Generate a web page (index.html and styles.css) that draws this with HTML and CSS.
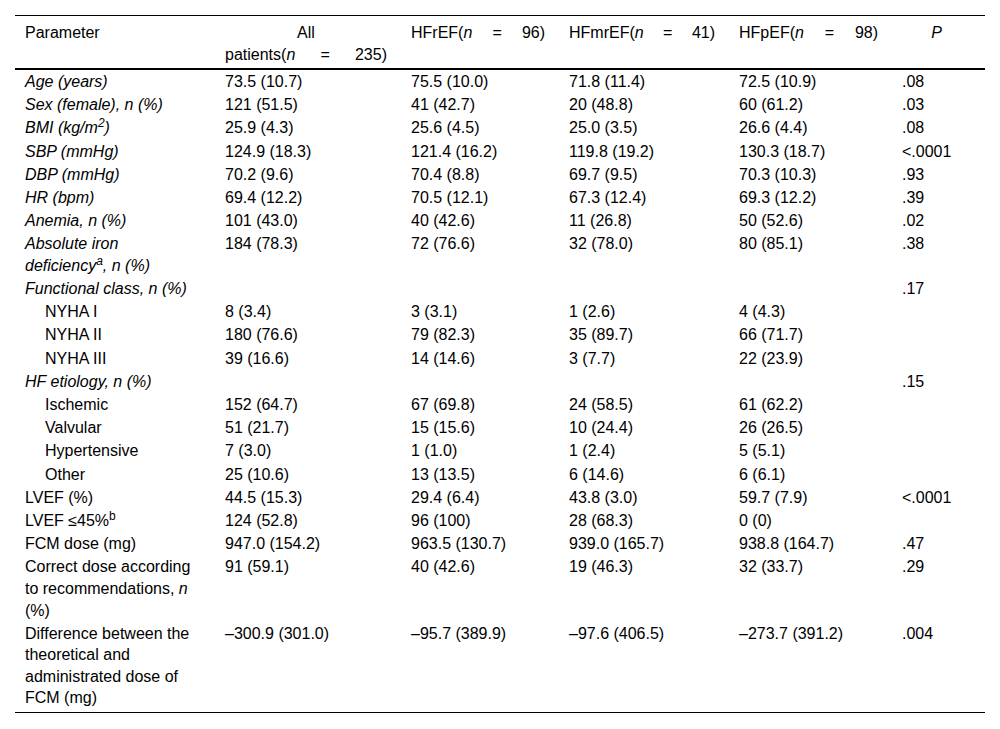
FILE: index.html
```html
<!DOCTYPE html>
<html>
<head>
<meta charset="utf-8">
<link rel="stylesheet" href="styles.css">
</head>
<body>
<table class="tbl">
  <colgroup>
    <col class="c1"><col class="c2"><col class="c3"><col class="c4"><col class="c5"><col class="c6">
  </colgroup>
  <thead>
    <tr>
      <th class="left">Parameter</th>
      <th><div class="ctr">All</div><div class="just">patients(<i>n</i> = 235)</div></th>
      <th><div class="just">HFrEF(<i>n</i> = 96)</div></th>
      <th><div class="just">HFmrEF(<i>n</i> = 41)</div></th>
      <th><div class="just">HFpEF(<i>n</i> = 98)</div></th>
      <th class="ctrcell"><i>P</i></th>
    </tr>
  </thead>
  <tbody>
    <tr><td><i>Age (years)</i></td><td>73.5 (10.7)</td><td>75.5 (10.0)</td><td>71.8 (11.4)</td><td>72.5 (10.9)</td><td>.08</td></tr>
    <tr><td><i>Sex (female), n (%)</i></td><td>121 (51.5)</td><td>41 (42.7)</td><td>20 (48.8)</td><td>60 (61.2)</td><td>.03</td></tr>
    <tr><td><i>BMI (kg/m<sup>2</sup>)</i></td><td>25.9 (4.3)</td><td>25.6 (4.5)</td><td>25.0 (3.5)</td><td>26.6 (4.4)</td><td>.08</td></tr>
    <tr><td><i>SBP (mmHg)</i></td><td>124.9 (18.3)</td><td>121.4 (16.2)</td><td>119.8 (19.2)</td><td>130.3 (18.7)</td><td>&lt;.0001</td></tr>
    <tr><td><i>DBP (mmHg)</i></td><td>70.2 (9.6)</td><td>70.4 (8.8)</td><td>69.7 (9.5)</td><td>70.3 (10.3)</td><td>.93</td></tr>
    <tr><td><i>HR (bpm)</i></td><td>69.4 (12.2)</td><td>70.5 (12.1)</td><td>67.3 (12.4)</td><td>69.3 (12.2)</td><td>.39</td></tr>
    <tr><td><i>Anemia, n (%)</i></td><td>101 (43.0)</td><td>40 (42.6)</td><td>11 (26.8)</td><td>50 (52.6)</td><td>.02</td></tr>
    <tr><td><i>Absolute iron deficiency<sup>a</sup>, n (%)</i></td><td>184 (78.3)</td><td>72 (76.6)</td><td>32 (78.0)</td><td>80 (85.1)</td><td>.38</td></tr>
    <tr><td><i>Functional class, n (%)</i></td><td></td><td></td><td></td><td></td><td>.17</td></tr>
    <tr><td class="sub">NYHA I</td><td>8 (3.4)</td><td>3 (3.1)</td><td>1 (2.6)</td><td>4 (4.3)</td><td></td></tr>
    <tr><td class="sub">NYHA II</td><td>180 (76.6)</td><td>79 (82.3)</td><td>35 (89.7)</td><td>66 (71.7)</td><td></td></tr>
    <tr><td class="sub">NYHA III</td><td>39 (16.6)</td><td>14 (14.6)</td><td>3 (7.7)</td><td>22 (23.9)</td><td></td></tr>
    <tr><td><i>HF etiology, n (%)</i></td><td></td><td></td><td></td><td></td><td>.15</td></tr>
    <tr><td class="sub">Ischemic</td><td>152 (64.7)</td><td>67 (69.8)</td><td>24 (58.5)</td><td>61 (62.2)</td><td></td></tr>
    <tr><td class="sub">Valvular</td><td>51 (21.7)</td><td>15 (15.6)</td><td>10 (24.4)</td><td>26 (26.5)</td><td></td></tr>
    <tr><td class="sub">Hypertensive</td><td>7 (3.0)</td><td>1 (1.0)</td><td>1 (2.4)</td><td>5 (5.1)</td><td></td></tr>
    <tr><td class="sub">Other</td><td>25 (10.6)</td><td>13 (13.5)</td><td>6 (14.6)</td><td>6 (6.1)</td><td></td></tr>
    <tr><td>LVEF (%)</td><td>44.5 (15.3)</td><td>29.4 (6.4)</td><td>43.8 (3.0)</td><td>59.7 (7.9)</td><td>&lt;.0001</td></tr>
    <tr><td>LVEF ≤45%<sup>b</sup></td><td>124 (52.8)</td><td>96 (100)</td><td>28 (68.3)</td><td>0 (0)</td><td></td></tr>
    <tr><td>FCM dose (mg)</td><td>947.0 (154.2)</td><td>963.5 (130.7)</td><td>939.0 (165.7)</td><td>938.8 (164.7)</td><td>.47</td></tr>
    <tr><td>Correct dose according to recommendations, <i>n</i> (%)</td><td>91 (59.1)</td><td>40 (42.6)</td><td>19 (46.3)</td><td>32 (33.7)</td><td>.29</td></tr>
    <tr class="last"><td>Difference between the theoretical and administrated dose of FCM (mg)</td><td>–300.9 (301.0)</td><td>–95.7 (389.9)</td><td>–97.6 (406.5)</td><td>–273.7 (391.2)</td><td>.004</td></tr>
  </tbody>
</table>
</body>
</html>
```
FILE: styles.css
```css
html, body {
  margin: 0;
  padding: 0;
  background: #ffffff;
}
body {
  font-family: "Liberation Sans", Arial, sans-serif;
  font-size: 16px;
  color: #000;
}
.tbl {
  margin: 15px 0 0 15px;
  width: 970px;
  border-collapse: collapse;
  table-layout: fixed;
  border-top: 1px solid #000;
  border-bottom: 1px solid #000;
}
.c1 { width: 200px; }
.c2 { width: 186px; }
.c3 { width: 158px; }
.c4 { width: 170px; }
.c5 { width: 163px; }
.c6 { width: 93px; }
.tbl th {
  font-weight: normal;
  text-align: left;
  vertical-align: top;
  line-height: 21.6px;
  padding: 6px 14px 3px 10px;
  border-bottom: 2px solid #000;
}
.tbl th.ctrcell { text-align: center; }
.ctr { text-align: center; }
.just {
  text-align: justify;
  text-align-last: justify;
}
.tbl td {
  vertical-align: top;
  line-height: 21.6px;
  padding: 0.8px 14px 0.8px 10px;
}
.tbl td.sub { padding-left: 30px; }
.tbl tr.last td { padding-bottom: 3px; }
sup {
  font-size: 12px;
  line-height: 0;
  vertical-align: 6px;
}
```
